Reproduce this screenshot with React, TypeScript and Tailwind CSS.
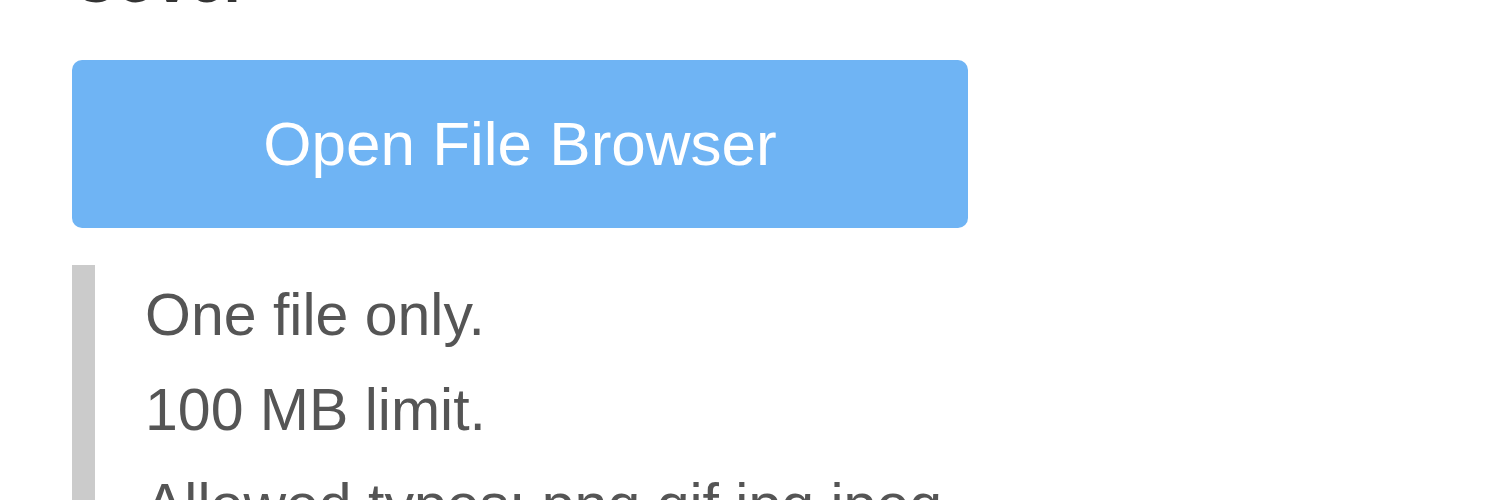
export default function App() {
  return (
    <div
      className="w-[1500px] h-[500px] overflow-hidden bg-white pl-[72px]"
      style={{ fontFamily: '"Liberation Sans", Arial, sans-serif' }}
    >
      <div className="mt-[-50px] text-[62px] leading-[62px] font-bold text-[#333333]">Cover</div>
      <button className="mt-[48px] flex h-[168px] w-[896px] items-center justify-center rounded-[10px] bg-[#6fb4f4] text-[62px] leading-none text-white">
        Open File Browser
      </button>
      <div className="mt-[37px] border-l-[23px] border-[#cbcbcb] pl-[50px] pt-[3px] text-[59px] leading-[95px] text-[#555555]">
        <p>One file only.</p>
        <p>100 MB limit.</p>
        <p>Allowed types: png gif jpg jpeg.</p>
      </div>
    </div>
  );
}
